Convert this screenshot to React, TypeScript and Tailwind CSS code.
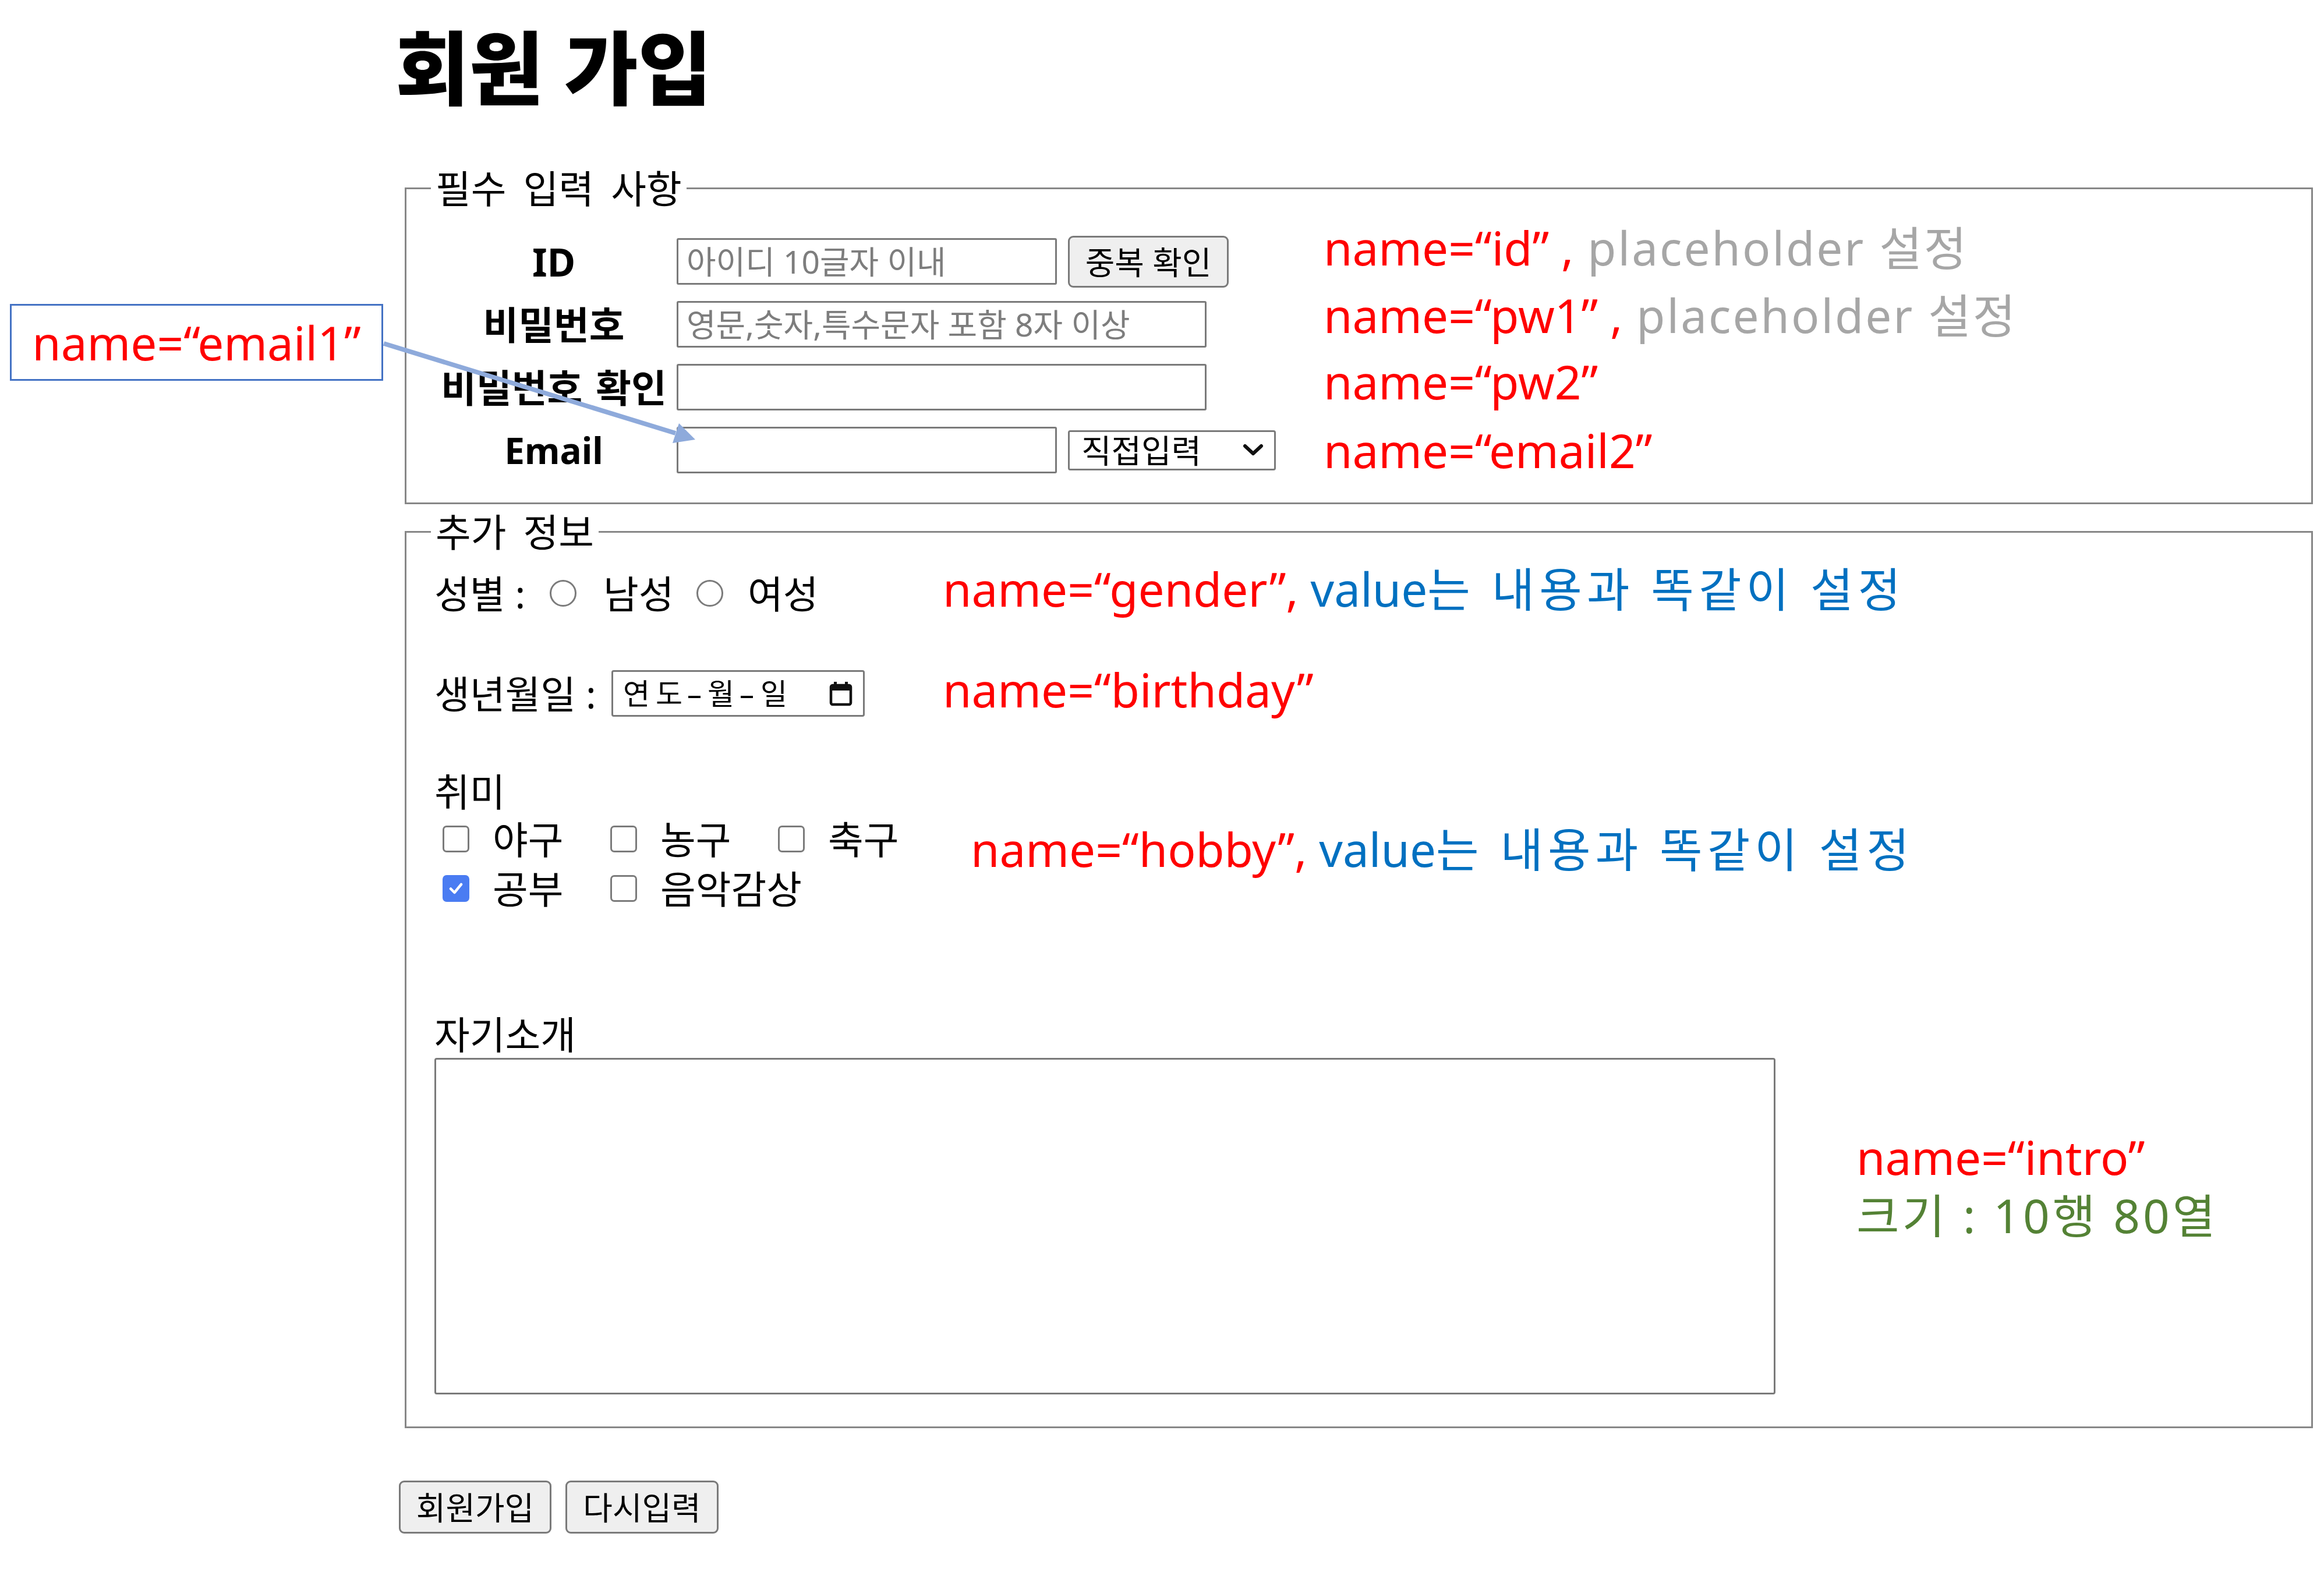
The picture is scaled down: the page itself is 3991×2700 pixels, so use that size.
import React from "react";

const SANS = "font-['Noto_Sans','Noto_Sans_CJK_KR',sans-serif]";

function Radio() {
  return <span className="block h-[46px] w-[46px] shrink-0 rounded-full border-[3px] border-[#7b7b7b] bg-white" />;
}

function Checkbox({ checked }: { checked?: boolean }) {
  if (checked) {
    return (
      <span className="flex h-[46px] w-[46px] shrink-0 items-center justify-center rounded-[7px] bg-[#4a7cf2]">
        <svg width="30" height="30" viewBox="0 0 30 30">
          <path d="M6 15.5 L12.5 22 L24 8" fill="none" stroke="white" strokeWidth="4.5" strokeLinecap="round" strokeLinejoin="round" />
        </svg>
      </span>
    );
  }
  return <span className="block h-[46px] w-[46px] shrink-0 rounded-[7px] border-[3px] border-[#7b7b7b] bg-white" />;
}

function LabelRow({ label, size = "text-[66px]", children }: { label: string; size?: string; children: React.ReactNode }) {
  return (
    <div className="flex h-[108px] items-center">
      <div className={`${size} w-[410px] whitespace-nowrap text-center font-bold leading-none [word-spacing:6px]`}>{label}</div>
      <div className="ml-[6px] flex items-center gap-[19px]">{children}</div>
    </div>
  );
}

function TextBox({ width, placeholder }: { width: string; placeholder?: string }) {
  return (
    <input
      readOnly
      placeholder={placeholder}
      className={`${width} h-[80px] rounded-[3px] border-[3px] border-[#7a7a7a] bg-white px-[14px] text-[55px] outline-none placeholder:text-[#7d7d7d]`}
    />
  );
}

function GrayButton({ children, className }: { children: React.ReactNode; className: string }) {
  return (
    <div className={`${className} flex items-center justify-center whitespace-nowrap rounded-[9px] border-[3px] border-[#7a7a7a] bg-[#efefef] text-[55px] leading-none`}>
      {children}
    </div>
  );
}

function RequiredInfo() {
  return (
    <fieldset className="ml-[9px] mt-[107px] w-[3277px] border-[3px] border-[#878787] pb-[36px] pl-[48px] pt-[36px]">
      <legend className="-ml-[6px] px-[8px] text-[66px] leading-[72px] [word-spacing:12px]">필수 입력 사항</legend>
      <LabelRow label="ID">
        <TextBox width="w-[653px]" placeholder="아이디 10글자 이내" />
        <GrayButton className="h-[89px] w-[276px]">중복 확인</GrayButton>
      </LabelRow>
      <LabelRow label="비밀번호">
        <TextBox width="w-[910px]" placeholder="영문,숫자,특수문자 포함 8자 이상" />
      </LabelRow>
      <LabelRow label="비밀번호 확인">
        <TextBox width="w-[910px]" />
      </LabelRow>
      <LabelRow label="Email" size="text-[62px]">
        <TextBox width="w-[653px]" />
        <div className="flex h-[69px] w-[357px] items-center justify-between rounded-[4px] border-[3px] border-[#7a7a7a] bg-white pl-[20px] pr-[18px] text-[56px] leading-none">
          <span>직접입력</span>
          <svg width="36" height="22" viewBox="0 0 36 22">
            <path d="M4 4 L18 17 L32 4" fill="none" stroke="#111" strokeWidth="6" strokeLinecap="round" strokeLinejoin="round" />
          </svg>
        </div>
      </LabelRow>
    </fieldset>
  );
}

function DateBox() {
  return (
    <div className="flex h-[80px] w-[435px] items-center rounded-[4px] border-[3px] border-[#7a7a7a] bg-white pl-[17px] pr-[18px] text-[50px] leading-none">
      <span className="w-[56px]">연</span>
      <span className="w-[54px]">도</span>
      <span className="w-[35px]">–</span>
      <span className="w-[55px]">월</span>
      <span className="w-[36px]">–</span>
      <span>일</span>
      <svg className="ml-auto" width="40" height="44" viewBox="0 0 40 44">
        <rect x="3" y="8" width="34" height="33" rx="3" fill="none" stroke="#111" strokeWidth="4.5" />
        <rect x="3" y="8" width="34" height="9" fill="#111" />
        <rect x="8" y="2" width="5" height="9" fill="#111" />
        <rect x="27" y="2" width="5" height="9" fill="#111" />
      </svg>
    </div>
  );
}

function Hobby({ label, checked }: { label: string; checked?: boolean }) {
  return (
    <div className="flex w-[288px] shrink-0 items-center whitespace-nowrap pl-[14px]">
      <Checkbox checked={checked} />
      <span className="ml-[40px]">{label}</span>
    </div>
  );
}

function ExtraInfo() {
  return (
    <fieldset className="ml-[9px] mt-[11px] w-[3277px] border-[3px] border-[#878787] pb-[55px] pl-[48px] pt-[30px] text-[66px] leading-none">
      <legend className="-ml-[6px] px-[8px] text-[66px] leading-[72px] [word-spacing:12px]">추가 정보</legend>
      <div className="flex h-[80px] items-center whitespace-nowrap">
        <span className="w-[198px]">성별 :</span>
        <Radio />
        <span className="ml-[46px] w-[160px]">남성</span>
        <Radio />
        <span className="ml-[42px]">여성</span>
      </div>
      <div className="mt-[92px] flex h-[80px] items-center whitespace-nowrap">
        <span className="w-[304px]">생년월일 :</span>
        <DateBox />
      </div>
      <div className="mt-[93px] h-[70px] leading-[70px]">취미</div>
      <div className="mt-[4px] flex h-[85px] items-center">
        <Hobby label="야구" />
        <Hobby label="농구" />
        <Hobby label="축구" />
      </div>
      <div className="flex h-[85px] items-center">
        <Hobby label="공부" checked />
        <Hobby label="음악감상" />
      </div>
      <div className="mt-[173px] h-[70px] leading-[70px]">자기소개</div>
      <div className="mt-[6px] h-[578px] w-[2303px] rounded-[4px] border-[3px] border-[#7a7a7a] bg-white" />
    </fieldset>
  );
}

function Notes() {
  return (
    <>
      <div className="absolute left-[2273px] top-[385px] whitespace-nowrap text-[80px] leading-none">
        <span className="text-[#ff0000]">name=“id” ,</span>
        <span className="tracking-[3px] text-[#a6a6a6]"> placeholder 설정</span>
      </div>
      <div className="absolute left-[2273px] top-[501px] whitespace-nowrap text-[80px] leading-none">
        <span className="text-[#ff0000]">name=“pw1” ,</span>
        <span className="tracking-[3px] text-[#a6a6a6]"> placeholder 설정</span>
      </div>
      <div className="absolute left-[2273px] top-[615px] whitespace-nowrap text-[80px] leading-none text-[#ff0000]">name=“pw2”</div>
      <div className="absolute left-[2273px] top-[733px] whitespace-nowrap text-[80px] leading-none text-[#ff0000]">name=“email2”</div>

      <div className="absolute left-[17px] top-[522px] flex h-[132px] w-[641px] items-center justify-center border-[3px] border-[#4472c4] bg-white text-[80px] leading-none text-[#ff0000]">
        name=“email1”
      </div>
      <svg className="pointer-events-none absolute left-0 top-0" width="1300" height="900" viewBox="0 0 1300 900">
        <line x1="659" y1="590" x2="1160" y2="744" stroke="#8eaadb" strokeWidth="8" />
        <polygon points="1194,755 1155,761 1166,727" fill="#8eaadb" />
      </svg>

      <div className="absolute left-[1619px] top-[971px] whitespace-nowrap text-[80px] leading-none">
        <span className="text-[#ff0000]">name=“gender”,</span>
        <span className="text-[#0070c0]"> value<span className="tracking-[8px]">는 내용과 똑같이 설정</span></span>
      </div>
      <div className="absolute left-[1619px] top-[1144px] whitespace-nowrap text-[80px] leading-none text-[#ff0000]">name=“birthday”</div>
      <div className="absolute left-[1667px] top-[1418px] whitespace-nowrap text-[80px] leading-none">
        <span className="text-[#ff0000]">name=“hobby”,</span>
        <span className="text-[#0070c0]"> value<span className="tracking-[8px]">는 내용과 똑같이 설정</span></span>
      </div>
      <div className="absolute left-[3188px] top-[1947px] whitespace-nowrap text-[80px] leading-none">
        <div className="text-[#ff0000]">name=“intro”</div>
        <div className="mt-[20px] tracking-[5px] text-[#548235]">크기 : 10행 80열</div>
      </div>
    </>
  );
}

export default function App() {
  return (
    <div className={`relative h-[2700px] w-[3991px] overflow-hidden bg-white text-black ${SANS}`}>
      <div className="pl-[686px] pt-[50px]">
        <h1 className="-ml-[7px] h-[130px] whitespace-nowrap text-[138px] font-extrabold leading-[130px]">회원 가입</h1>
        <form>
          <RequiredInfo />
          <ExtraInfo />
          <div className="mt-[90px] flex gap-[24px]">
            <GrayButton className="-ml-[1px] h-[91px] w-[262px]">회원가입</GrayButton>
            <GrayButton className="h-[91px] w-[263px]">다시입력</GrayButton>
          </div>
        </form>
      </div>
      <Notes />
    </div>
  );
}
